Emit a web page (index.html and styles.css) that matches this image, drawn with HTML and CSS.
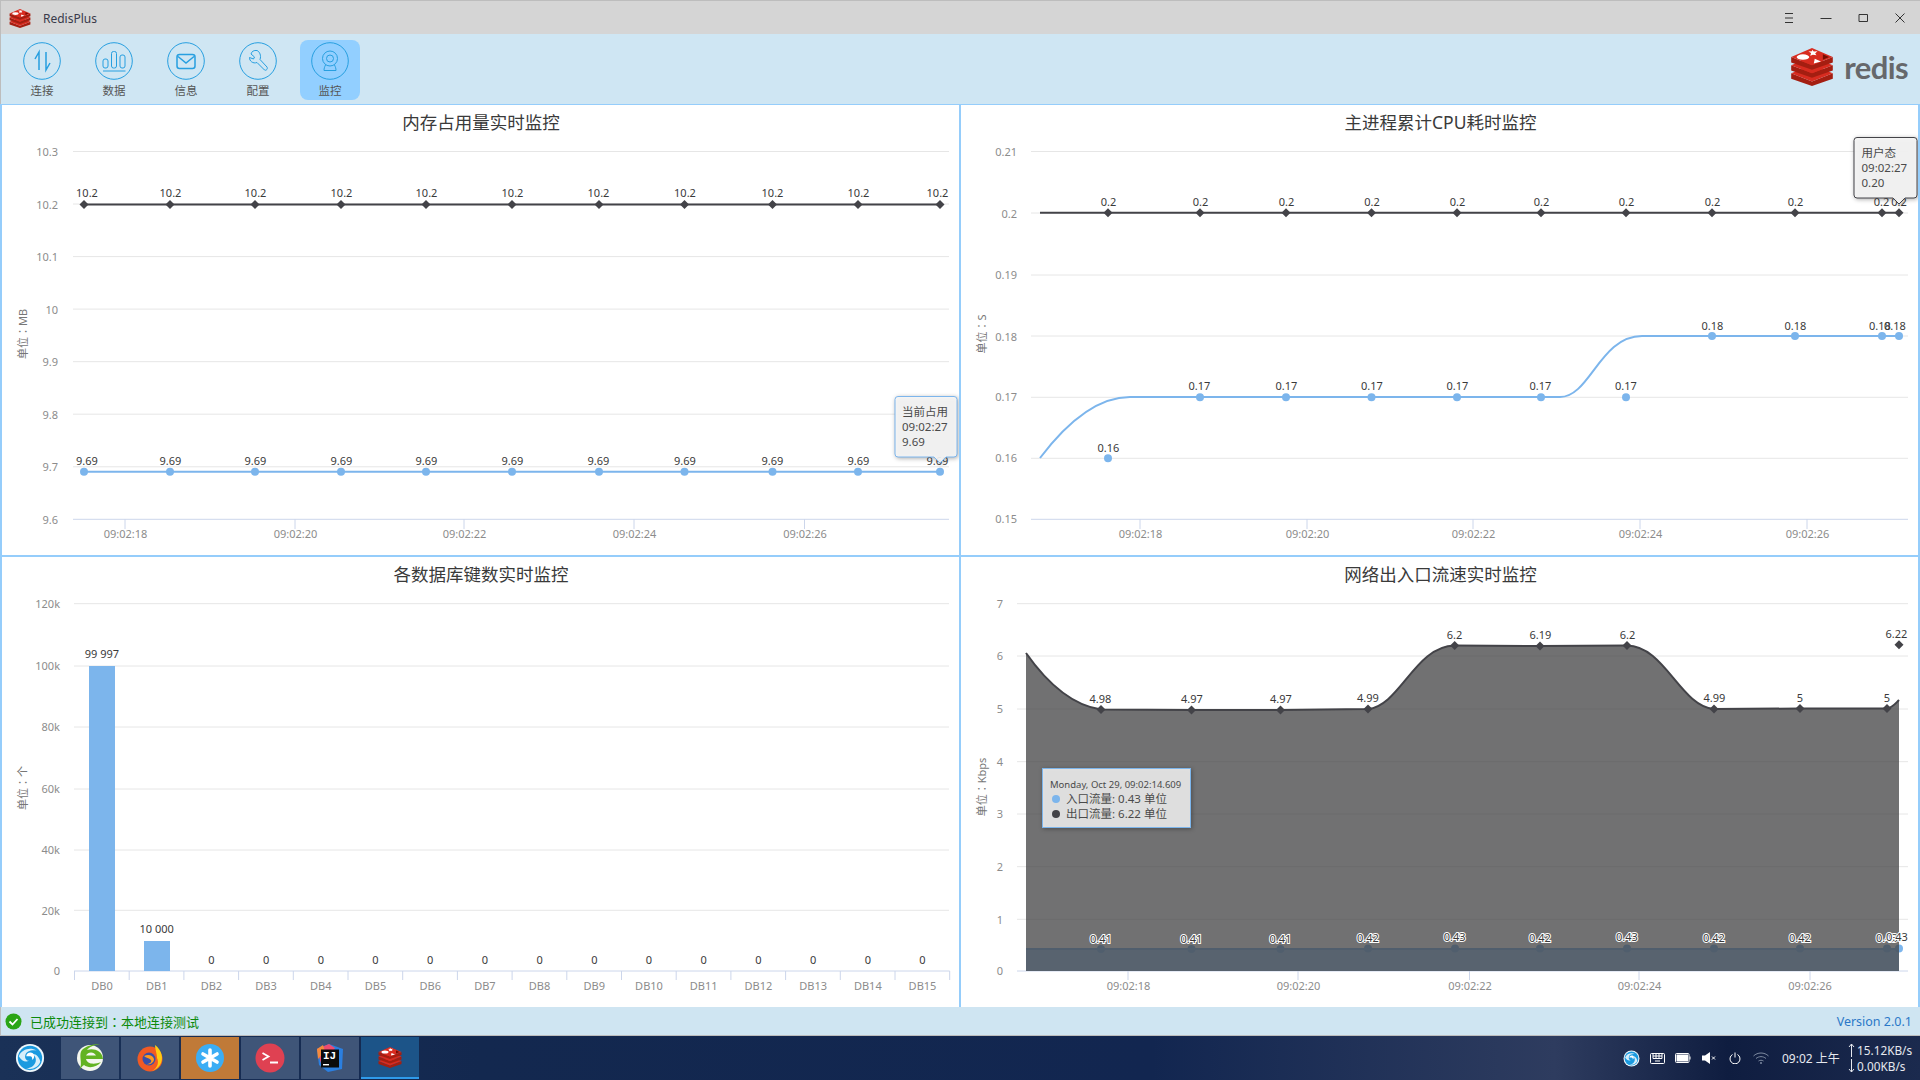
FILE: index.html
```html
<!DOCTYPE html>
<html lang="zh-CN">
<head>
<meta charset="utf-8">
<title>RedisPlus</title>
<link rel="stylesheet" href="styles.css">
</head>
<body>
<svg class="defs" width="0" height="0">
  <defs>
    <symbol id="redis" viewBox="0 0 48 42">
      <path fill="#a41e11" d="M1 28l23 9 23-9v6L24 42 1 34z"/><path fill="#d82c20" d="M24 19l23 9-23 9-23-9z"/>
      <path fill="#a41e11" d="M1 19l23 9 23-9v6L24 33 1 25z"/><path fill="#d82c20" d="M24 10l23 9-23 9-23-9z"/>
      <path fill="#a41e11" d="M1 10l23 9 23-9v6L24 24 1 16z"/><path fill="#d82c20" d="M24 0l23 10-23 9L1 10z"/>
      <ellipse cx="14" cy="10" rx="7" ry="3" fill="#fff"/><path fill="#fff" d="M24 2l2 2 4-.5-2.500 2.500 1.500 2-4-.5-3 1 1-3-3-1.500 4-.5z"/>
      <path fill="#fff" d="M27 12l7 3-8 2z"/><path fill="#7a0c00" d="M36 7l7 3-7 3z"/>
    </symbol>
    <symbol id="deepin" viewBox="0 0 32 32">
      <circle cx="16" cy="16" r="15" fill="#eef7fc"/><circle cx="16" cy="16" r="13" fill="#1a9ae0"/>
      <path d="M4 14C7 7 16 4 23 8c-6-1-11 1-12 5-1 3 1 6 4 6-4 2-8 0-11-5z" fill="#d7eefa"/>
      <path d="M27 20c-2 6-9 9-15 7 5 0 9-3 10-7 1-4-1-7-4-8 4-1 8 3 9 8z" fill="#d7eefa"/>
      <path d="M12 14c0-3 4-5 7-3 2 2 2 6-1 7 1-2 0-4-2-4-1.500 0-3 0-4 0z" fill="#fff"/>
    </symbol>
    <marker id="dia" viewBox="-5 -5 10 10" markerWidth="10" markerHeight="10" markerUnits="userSpaceOnUse"><path fill="#434348" d="M0-4.500L4.500 0 0 4.500-4.500 0z"/></marker>
    <marker id="dot" viewBox="-5 -5 10 10" markerWidth="10" markerHeight="10" markerUnits="userSpaceOnUse"><circle r="4" fill="#7cb5ec"/></marker>
  </defs>
</svg>

<header class="titlebar">
  <svg class="title-logo" width="22" height="19"><use href="#redis"/></svg>
  <span class="app-name">RedisPlus</span>
  <div class="win-controls">
    <svg width="14" height="14" viewBox="0 0 14 14"><path d="M3 2.500h8M3 7h8M3 11.500h8"/></svg>
    <svg width="14" height="14" viewBox="0 0 14 14"><path d="M1.500 7.500h11"/></svg>
    <svg width="14" height="14" viewBox="0 0 14 14"><path d="M3 3.500h8.500v7H3z"/></svg>
    <svg width="14" height="14" viewBox="0 0 14 14"><path d="M2.500 2.500l9 9M11.500 2.500l-9 9"/></svg>
  </div>
</header>

<nav class="toolbar">
  <div class="tool"><svg class="tool-icon" viewBox="0 0 38 38"><circle cx="19" cy="19" r="18.300"/><path d="M16 28V10l-4 7M23 10v18l4-7" stroke-width="1.500"/></svg><span>连接</span></div>
  <div class="tool"><svg class="tool-icon" viewBox="0 0 38 38"><circle cx="19" cy="19" r="18.300"/><rect x="8" y="17" width="5" height="9" rx="2"/><rect x="16.500" y="9.500" width="5" height="16.500" rx="2"/><rect x="25" y="13" width="5" height="13" rx="2"/><path d="M8 29h22.500"/></svg><span>数据</span></div>
  <div class="tool"><svg class="tool-icon" viewBox="0 0 38 38"><circle cx="19" cy="19" r="18.300"/><rect x="10" y="12.500" width="18" height="14" rx="2.500" stroke-width="1.500"/><path d="M11 14.500l8 6.500 8-6.500" stroke-width="1.500"/></svg><span>信息</span></div>
  <div class="tool"><svg class="tool-icon" viewBox="0 0 38 38"><circle cx="19" cy="19" r="18.300"/><path d="M15 9.500c-3-.5-5.500 1-6 3.500l3.500 3-1 2-4-1.500c-.2 3.500 3.500 6.500 7.500 5l7.500 7.500c2 1 3.500-1.500 2.500-3L18 18.500c1.500-4-.5-8-3-9z" transform="translate(3 -1)"/></svg><span>配置</span></div>
  <div class="tool active"><svg class="tool-icon" viewBox="0 0 38 38"><circle cx="19" cy="19" r="18.300"/><circle cx="19" cy="16.500" r="7.500"/><circle cx="19" cy="16.500" r="3.500"/><path d="M14.500 23c-1 2-1.500 3.500-1.500 5.500h12c0-2-.5-3.500-1.500-5.500"/></svg><span>监控</span></div>
  <div class="brand"><svg width="44" height="38"><use href="#redis"/></svg><span>redis</span></div>
</nav>

<main class="charts">
  <section class="panel">
    <svg class="chart" viewBox="2 105 957 450">
      <text class="title" x="481" y="129">内存占用量实时监控</text>
      <path class="grid" d="M73 151.500H949M73 204H949M73 256.600H949M73 309.100H949M73 361.700H949M73 414.200H949M73 466.800H949"/>
      <path class="axis" d="M73 519.300H949M125 519v10M295 519v10M464 519v10M634 519v10M804.500 519v10"/>
      <g class="ylab">
        <text x="58" y="156">10.3</text><text x="58" y="208.500">10.2</text><text x="58" y="261">10.1</text><text x="58" y="313.500">10</text><text x="58" y="366">9.9</text><text x="58" y="418.500">9.8</text><text x="58" y="471">9.7</text><text x="58" y="523.500">9.6</text>
      </g>
      <text class="ytitle" lang="zh-Hant" transform="translate(27 334) rotate(-90)">单位：MB</text>
      <g class="xlab"><text x="125.500" y="538">09:02:18</text><text x="295.500" y="538">09:02:20</text><text x="464.500" y="538">09:02:22</text><text x="634.500" y="538">09:02:24</text><text x="805" y="538">09:02:26</text></g>
      <polyline class="s-dark" points="84,204.500 170,204.500 255,204.500 341,204.500 426,204.500 512,204.500 599,204.500 684.500,204.500 772.500,204.500 858,204.500 940,204.500" marker-start="url(#dia)" marker-mid="url(#dia)" marker-end="url(#dia)"/>
      <polyline class="s-blue" points="84,471.700 170,471.700 255,471.700 341,471.700 426,471.700 512,471.700 599,471.700 684.500,471.700 772.500,471.700 858,471.700 940,471.700" marker-start="url(#dot)" marker-mid="url(#dot)" marker-end="url(#dot)"/>
      <g class="dl">
        <text x="87" y="197">10.2</text><text x="170.500" y="197">10.2</text><text x="255.500" y="197">10.2</text><text x="341.500" y="197">10.2</text><text x="426.500" y="197">10.2</text><text x="512.500" y="197">10.2</text><text x="598.500" y="197">10.2</text><text x="685" y="197">10.2</text><text x="772.500" y="197">10.2</text><text x="858.500" y="197">10.2</text><text x="937.500" y="197">10.2</text>
        <text x="87" y="465">9.69</text><text x="170.500" y="465">9.69</text><text x="255.500" y="465">9.69</text><text x="341.500" y="465">9.69</text><text x="426.500" y="465">9.69</text><text x="512.500" y="465">9.69</text><text x="598.500" y="465">9.69</text><text x="685" y="465">9.69</text><text x="772.500" y="465">9.69</text><text x="858.500" y="465">9.69</text><text x="937.500" y="465">9.69</text>
      </g>
      <path class="tip tip-blue" d="M898 396.500H954a3 3 0 0 1 3 3V454a3 3 0 0 1-3 3H946L940 463 934 457H898a3 3 0 0 1-3-3V399.500a3 3 0 0 1 3-3z"/>
      <g class="tiptext"><text x="902" y="416">当前占用</text><text x="902" y="431">09:02:27</text><text x="902" y="446">9.69</text></g>
    </svg>
  </section>

  <section class="panel">
    <svg class="chart" viewBox="961 105 957 450">
      <text class="title" x="1440.500" y="129">主进程累计CPU耗时监控</text>
      <path class="grid" d="M1031 151.500H1908M1031 213H1908M1031 275H1908M1031 336H1908M1031 397.300H1908M1031 458.300H1908"/>
      <path class="axis" d="M1031 519.300H1908M1140 519v10M1307 519v10M1473 519v10M1640 519v10M1807 519v10"/>
      <g class="ylab">
        <text x="1017" y="156">0.21</text><text x="1017" y="217.500">0.2</text><text x="1017" y="279">0.19</text><text x="1017" y="340.500">0.18</text><text x="1017" y="401">0.17</text><text x="1017" y="462">0.16</text><text x="1017" y="523">0.15</text>
      </g>
      <text class="ytitle" lang="zh-Hant" transform="translate(986 334) rotate(-90)">单位：S</text>
      <g class="xlab"><text x="1140.500" y="538">09:02:18</text><text x="1307.500" y="538">09:02:20</text><text x="1473.500" y="538">09:02:22</text><text x="1640.500" y="538">09:02:24</text><text x="1807.500" y="538">09:02:26</text></g>
      <polyline class="s-dark" points="1040,212.700 1108,212.700 1200,212.700 1286,212.700 1371.500,212.700 1457,212.700 1541,212.700 1626,212.700 1712,212.700 1795,212.700 1882,212.700 1899,212.700" marker-mid="url(#dia)" marker-end="url(#dia)"/>
      <path class="s-blue" d="M1040 458C1065 425 1095 397 1130 397H1560C1590 397 1600 336 1642 336H1899"/>
      <polyline class="s-none" points="1108,458.300 1200,397.300 1286,397.300 1371.500,397.300 1457,397.300 1541,397.300 1626,397.300" marker-start="url(#dot)" marker-mid="url(#dot)" marker-end="url(#dot)"/>
      <polyline class="s-none" points="1712,336 1795,336 1882,336 1899,336" marker-start="url(#dot)" marker-mid="url(#dot)" marker-end="url(#dot)"/>
      <g class="dl">
        <text x="1108.500" y="206">0.2</text><text x="1200.500" y="206">0.2</text><text x="1286.500" y="206">0.2</text><text x="1372" y="206">0.2</text><text x="1457.500" y="206">0.2</text><text x="1541.500" y="206">0.2</text><text x="1626.500" y="206">0.2</text><text x="1712.500" y="206">0.2</text><text x="1795.500" y="206">0.2</text><text x="1881.500" y="206">0.2</text><text x="1899" y="206">0.2</text>
        <text x="1108.500" y="452">0.16</text><text x="1199.500" y="390">0.17</text><text x="1286.500" y="390">0.17</text><text x="1372" y="390">0.17</text><text x="1457.500" y="390">0.17</text><text x="1540.500" y="390">0.17</text><text x="1626" y="390">0.17</text>
        <text x="1712.500" y="330">0.18</text><text x="1795.500" y="330">0.18</text><text x="1880" y="330">0.18</text><text x="1895" y="330">0.18</text>
      </g>
      <path class="tip tip-dark" d="M1857 137.500H1914a3 3 0 0 1 3 3V195a3 3 0 0 1-3 3H1905L1899 204 1893 198H1857a3 3 0 0 1-3-3V140.500a3 3 0 0 1 3-3z"/>
      <g class="tiptext"><text x="1861.500" y="157">用户态</text><text x="1861.500" y="172">09:02:27</text><text x="1861.500" y="187">0.20</text></g>
    </svg>
  </section>

  <section class="panel">
    <svg class="chart" viewBox="2 557 957 450">
      <text class="title" x="481" y="581">各数据库键数实时监控</text>
      <path class="grid" d="M74 603.700H949M74 666H949M74 727H949M74 789H949M74 850H949M74 910.300H949"/>
      <path class="axis" d="M74 971H949.700M74.500 971v9M129.200 971v9M183.900 971v9M238.600 971v9M293.300 971v9M348 971v9M402.700 971v9M457.400 971v9M512.100 971v9M566.800 971v9M621.500 971v9M676.200 971v9M730.900 971v9M785.600 971v9M840.300 971v9M895 971v9M949.700 971v9"/>
      <g class="ylab"><text x="60" y="608">120k</text><text x="60" y="670">100k</text><text x="60" y="731">80k</text><text x="60" y="793">60k</text><text x="60" y="854">40k</text><text x="60" y="914.500">20k</text><text x="60" y="975">0</text></g>
      <text class="ytitle" lang="zh-Hant" transform="translate(27 788) rotate(-90)">单位：个</text>
      <rect class="bar" x="89" y="666" width="26" height="305"/>
      <rect class="bar" x="144" y="941" width="26" height="30"/>
      <g class="xlab"><text x="102" y="990">DB0</text><text x="156.700" y="990">DB1</text><text x="211.400" y="990">DB2</text><text x="266.100" y="990">DB3</text><text x="320.800" y="990">DB4</text><text x="375.500" y="990">DB5</text><text x="430.200" y="990">DB6</text><text x="484.900" y="990">DB7</text><text x="539.600" y="990">DB8</text><text x="594.300" y="990">DB9</text><text x="649" y="990">DB10</text><text x="703.700" y="990">DB11</text><text x="758.400" y="990">DB12</text><text x="813.100" y="990">DB13</text><text x="867.800" y="990">DB14</text><text x="922.500" y="990">DB15</text></g>
      <g class="dl"><text x="102" y="658">99 997</text><text x="156.700" y="933">10 000</text><text x="211.400" y="964">0</text><text x="266.100" y="964">0</text><text x="320.800" y="964">0</text><text x="375.500" y="964">0</text><text x="430.200" y="964">0</text><text x="484.900" y="964">0</text><text x="539.600" y="964">0</text><text x="594.300" y="964">0</text><text x="649" y="964">0</text><text x="703.700" y="964">0</text><text x="758.400" y="964">0</text><text x="813.100" y="964">0</text><text x="867.800" y="964">0</text><text x="922.500" y="964">0</text></g>
    </svg>
  </section>

  <section class="panel">
    <svg class="chart" viewBox="961 557 957 450">
      <text class="title" x="1440.500" y="581">网络出入口流速实时监控</text>
      <path class="grid" d="M1017 603.700H1908M1017 656H1908M1017 709H1908M1017 761.700H1908M1017 814H1908M1017 866.700H1908M1017 919.300H1908"/>
      <path class="axis" d="M1017 971H1908M1128 971v9M1298 971v9M1469.500 971v9M1639 971v9M1810 971v9"/>
      <g class="ylab"><text x="1003" y="608">7</text><text x="1003" y="660">6</text><text x="1003" y="713">5</text><text x="1003" y="766">4</text><text x="1003" y="818">3</text><text x="1003" y="871">2</text><text x="1003" y="923.500">1</text><text x="1003" y="975">0</text></g>
      <text class="ytitle" lang="zh-Hant" transform="translate(986 787) rotate(-90)">单位：Kbps</text>
      <g class="xlab"><text x="1128.500" y="990">09:02:18</text><text x="1298.500" y="990">09:02:20</text><text x="1470" y="990">09:02:22</text><text x="1639.500" y="990">09:02:24</text><text x="1810" y="990">09:02:26</text></g>
      <rect class="area-blue" x="1026" y="949" width="873" height="22"/>
      <path class="s-blue" d="M1026 949H1899"/>
      <polyline class="s-none" points="1101,949 1191.500,949 1280.500,949 1368,948.500 1455,948.500 1540,948.500 1627,948.500 1714,948.500 1800,948.500 1887,948.500 1899,948.500" marker-mid="url(#dot)" marker-end="url(#dot)" marker-start="url(#dot)"/>
      <path class="area-dark" d="M1026 653C1045 680 1070 705 1101 709.500L1191.500 710 1280.500 710 1368 709C1400 706 1415 646 1454.700 645.500L1540 646 1627 645.500C1665 646 1680 706 1714 709L1800 708.500 1887 708.500C1892 708 1895 704 1899 700V971H1026z"/>
      <path class="s-dark" d="M1026 653C1045 680 1070 705 1101 709.500L1191.500 710 1280.500 710 1368 709C1400 706 1415 646 1454.700 645.500L1540 646 1627 645.500C1665 646 1680 706 1714 709L1800 708.500 1887 708.500C1892 708 1895 704 1899 700" marker-mid="url(#dia)"/>
      <polyline class="s-none" points="1899,644.700 1899,644.700" marker-start="url(#dia)"/>
      <g class="dl">
        <text x="1100.500" y="703">4.98</text><text x="1192" y="703">4.97</text><text x="1281" y="703">4.97</text><text x="1368" y="702">4.99</text><text x="1454.500" y="639">6.2</text><text x="1540.500" y="639">6.19</text><text x="1627.500" y="639">6.2</text><text x="1714.500" y="702">4.99</text><text x="1800" y="702">5</text><text x="1887" y="702">5</text><text x="1896.500" y="638">6.22</text>
      </g>
      <g class="dl halo">
        <text x="1101" y="943">0.41</text><text x="1191.500" y="943">0.41</text><text x="1280.500" y="943">0.41</text><text x="1368" y="942">0.42</text><text x="1454.700" y="941">0.43</text><text x="1540" y="942">0.42</text><text x="1627" y="941">0.43</text><text x="1714" y="942">0.42</text><text x="1800" y="942">0.42</text><text x="1887" y="942">0.43</text><text x="1897" y="941">0.43</text>
      </g>
      <rect class="tip tip-blue tip-solid" x="1042.500" y="768.500" width="148" height="59"/>
      <text class="tipdate" x="1050" y="788">Monday, Oct 29, 09:02:14.609</text>
      <circle cx="1056" cy="799" r="4" fill="#7cb5ec"/><circle cx="1056" cy="814" r="4" fill="#434348"/>
      <g class="tiptext row"><text x="1066" y="803">入口流量: 0.43 单位</text><text x="1066" y="818">出口流量: 6.22 单位</text></g>
    </svg>
  </section>
</main>

<footer class="statusbar">
  <svg width="17" height="17" viewBox="0 0 17 17"><circle cx="8.500" cy="8.500" r="8" fill="#2aa515"/><path d="M4.500 8.500l3 3 5-5.500" fill="none" stroke="#fff" stroke-width="1.800"/></svg>
  <span class="ok" lang="zh-Hant">已成功连接到：本地连接测试</span>
  <span class="version">Version 2.0.1</span>
</footer>

<div class="taskbar">
  <div class="launcher">
    <svg width="30" height="30"><use href="#deepin"/></svg>
  </div>
  <div class="task">
    <svg width="32" height="32" viewBox="0 0 32 32"><circle cx="16" cy="16" r="13" fill="#f4f6ee"/><path d="M5 28C10 22 3 12 9 7c5-4 12-5 17-5-6 1-11 3-13 6 6-2 15 0 16 9H12c1 5 8 6 15 3-4 5-12 7-17 3-2 1-3 3-5 5z" fill="#62b322"/><path d="M12 13.500h10c-2-4-8-4-10 0z" fill="#f4f6ee"/></svg>
  </div>
  <div class="task">
    <svg width="32" height="32" viewBox="0 0 32 32"><circle cx="16" cy="17" r="12.500" fill="#f15a24"/><path d="M21 3c7 5 9 14 5 20-2 3-5 5-8 6 6-3 7-9 5-13 0-4-2-9-2-13z" fill="#ffcb12"/><circle cx="15" cy="17" r="6.500" fill="#3a4fa8"/><path d="M10 14c4-2 9-1 10 3 0 4-4 6-8 5 4 0 6-2 5-4-2-2-5-2-7-4z" fill="#ff9a1f"/></svg>
  </div>
  <div class="task task-orange">
    <svg width="32" height="32" viewBox="0 0 32 32"><circle cx="16" cy="16" r="14" fill="#3badf4"/><path d="M16 8v16M9 12l14 8M23 12L9 20" stroke="#fff" stroke-width="3.600" stroke-linecap="round"/></svg>
  </div>
  <div class="task">
    <svg width="32" height="32" viewBox="0 0 32 32"><circle cx="16" cy="16" r="14.500" fill="#df4152"/><path d="M8.500 11l6 3.500-6 3.500" fill="none" stroke="#fff" stroke-width="1.800"/><path d="M16 20.500h8" stroke="#fff" stroke-width="2"/></svg>
  </div>
  <div class="task">
    <svg width="32" height="32" viewBox="0 0 32 32"><path d="M3 7L15 2l14 5-1 20-14 3-9-7z" fill="#2b7fe0"/><path d="M3 7L15 2l6 4-13 19z" fill="#ee4b6f"/><path d="M3 7l6-4 2 6-7 8z" fill="#f58a3c"/><rect x="7" y="7.500" width="18" height="18" fill="#0b0b0d"/><rect x="9" y="22" width="6" height="1.400" fill="#fff"/></svg>
    <span class="ij">IJ</span>
  </div>
  <div class="task task-active">
    <svg width="24" height="21"><use href="#redis"/></svg>
  </div>
  <div class="tray">
    <span class="tray-item"><svg width="17" height="17"><use href="#deepin"/></svg></span>
    <span class="tray-item"><svg width="15" height="11" viewBox="0 0 15 11" class="outline"><rect x=".5" y=".5" width="14" height="10" rx="1"/><path d="M3 3h9M3 5.500h9M5 8h5M3 .5v5M6 .5v5M9 .5v5M12 .5v5"/></svg></span>
    <span class="tray-item"><svg width="16" height="10" viewBox="0 0 16 10" class="outline"><rect x=".5" y=".5" width="13.500" height="9" rx="1"/><rect x="2" y="2" width="10.500" height="6" fill="#fff"/><path d="M15 3.500v3"/></svg></span>
    <span class="tray-item"><svg width="14" height="12" viewBox="0 0 14 12"><path d="M0 3.500h3L8 0v12L3 8.500H0z" fill="#fff"/><path d="M10 4.500l3 3M13 4.500l-3 3" stroke="#fff" fill="none"/></svg></span>
    <span class="tray-item"><svg width="12" height="12" viewBox="0 0 12 12" class="outline"><path d="M3.500 2.500a5 5 0 1 0 5 0M6 .5v5"/></svg></span>
    <span class="tray-item"><svg width="16" height="12" viewBox="0 0 16 12" class="dim"><path d="M.5 4c4-4 11-4 15 0M3 6.500c3-2.500 7-2.500 10 0M5.500 9c1.500-1 3.500-1 5 0"/><circle cx="8" cy="11" r="1" fill="#7d8aa0" stroke="none"/></svg></span>
    <span class="clock">09:02 上午</span>
    <div class="net">
      <div class="net-row"><svg width="7" height="14" viewBox="0 0 7 14"><path d="M3.500 14V1M1 4l2.500-3L6 4"/></svg><span>15.12KB/s</span></div>
      <div class="net-row"><svg width="7" height="14" viewBox="0 0 7 14"><path d="M3.500 0v13M1 10l2.500 3L6 10"/></svg><span>0.00KB/s</span></div>
    </div>
  </div>
</div>
</body>
</html>
```

FILE: styles.css
```css
* { box-sizing: border-box; }
html, body { margin: 0; height: 1080px; overflow: hidden; }
body {
  display: flex;
  flex-direction: column;
  width: 1920px;
  font-family: "Noto Sans", "Noto Sans CJK SC", sans-serif;
  background: #fff;
}
.defs { position: absolute; }

.titlebar {
  height: 34px;
  flex: none;
  display: flex;
  align-items: center;
  background: #d5d5d5;
  border-top: 1px solid #bdbdbd;
  border-left: 1px solid #bdbdbd;
  padding: 1px 0 0 8px;
}
.app-name { margin-left: 12px; font-size: 12px; color: #3a3a4a; }
.win-controls { margin-left: auto; display: flex; gap: 23px; padding-right: 13px; }
.win-controls svg { fill: none; stroke: #333; stroke-width: 1; }

.toolbar {
  height: 70px;
  flex: none;
  display: flex;
  gap: 12px;
  padding: 6px 0 4px 11px;
  background: #cfe6f3;
  border-left: 1px solid #bdbdbd;
}
.tool {
  width: 60px;
  height: 60px;
  padding-top: 2px;
  display: flex;
  flex-direction: column;
  align-items: center;
  gap: 2px;
  border-radius: 8px;
  font-size: 11.500px;
  line-height: 18px;
  color: #555;
}
.tool.active { background: #92cfff; }
.tool-icon { width: 38px; height: 38px; fill: none; stroke: #279fe0; stroke-width: 1; flex: none; }
.brand { margin-left: auto; display: flex; align-items: center; gap: 10px; padding-right: 12px; height: 48px; margin-top: 3px; }
.brand span { font-family: Lato, sans-serif; font-weight: 700; font-size: 31px; letter-spacing: -.6px; color: #66686b; line-height: 38px; }

.charts {
  height: 903px;
  flex: none;
  display: grid;
  grid-template-columns: 957px 957px;
  grid-template-rows: 450px 450px;
  gap: 2px;
  padding: 1px 2px 0;
  background: #95cdfb;
}
.panel { background: #fff; }
.chart { display: block; width: 957px; height: 450px; font-size: 11px; }
.title { font-size: 17.500px; fill: #3a3a3a; text-anchor: middle; }
.grid { stroke: #e6e6e6; fill: none; }
.axis { stroke: #ccd6eb; fill: none; }
.ylab text { fill: #8c8c8c; text-anchor: end; }
.xlab text { fill: #8c8c8c; text-anchor: middle; }
.ytitle { fill: #777; text-anchor: middle; font-size: 11px; font-family: "Noto Sans", "Noto Sans CJK TC", sans-serif; }
.dl text { fill: #3a3a3a; text-anchor: middle; }
.halo text { paint-order: stroke; stroke: #fff; stroke-width: 2px; }
.s-dark { fill: none; stroke: #434348; stroke-width: 2; }
.s-blue { fill: none; stroke: #7cb5ec; stroke-width: 2; }
.s-none { fill: none; stroke: none; }
.bar { fill: #7cb5ec; }
.area-blue { fill: rgba(124, 181, 236, .75); }
.area-dark { fill: rgba(65, 65, 67, .75); }
.tip { fill: rgba(247, 247, 247, .9); stroke-width: 1; filter: drop-shadow(1px 1px 2px rgba(0, 0, 0, .35)); }
.tip-blue { stroke: #7cb5ec; }
.tip-dark { stroke: #434348; }
.tip-solid { fill: rgba(247, 247, 247, .85); }
.tiptext text { font-size: 11.500px; fill: #4a4a4a; }
.tipdate { font-size: 9.500px; fill: #4a4a4a; }

.statusbar {
  height: 29px;
  flex: none;
  display: flex;
  align-items: center;
  padding: 0 8px 0 4px;
  background: #cfe5f2;
  border-left: 1px solid #bdbdbd;
  border-bottom: 1px solid #bdbdbd;
  font-size: 13px;
}
.ok { margin-left: 8px; color: #0b8a0b; font-family: "Noto Sans", "Noto Sans CJK TC", sans-serif; }
.version { margin-left: auto; color: #2a78c8; font-size: 12.500px; }

.taskbar {
  flex: 1;
  display: flex;
  align-items: stretch;
  gap: 2px;
  padding: 1px 0;
  background: linear-gradient(90deg, #1a3157 0, #13284f 25%, #122650 60%, #2e3c5f 81%, #0f1d40 90%, #1b2a4e 100%);
}
.launcher { width: 59px; display: flex; align-items: center; justify-content: center; }
.task {
  position: relative;
  width: 58px;
  display: flex;
  align-items: center;
  justify-content: center;
  background: #3f5578;
}
.task-orange { background: #c07a38; }
.task-active { background: #1c5488; border-bottom: 2px solid #2f9bea; }
.ij { position: absolute; left: 22px; top: 12px; font: 700 11px/14px "Liberation Mono", monospace; color: #fff; }
.tray { margin-left: auto; display: flex; align-items: center; color: #fff; padding-right: 8px; }
.tray-item { width: 26px; display: flex; justify-content: center; align-items: center; }
.outline, .dim { fill: none; stroke: #fff; stroke-width: 1; }
.dim { stroke: #7d8aa0; }
.clock { margin-left: 8px; width: 66px; font-size: 12px; color: #e6e9ef; }
.net { display: flex; flex-direction: column; font-size: 11.800px; line-height: 16px; color: #e6e9ef; width: 64px; }
.net-row { display: flex; align-items: center; gap: 2px; }
.net-row svg { fill: none; stroke: #e6e9ef; stroke-width: 1; flex: none; }
```
